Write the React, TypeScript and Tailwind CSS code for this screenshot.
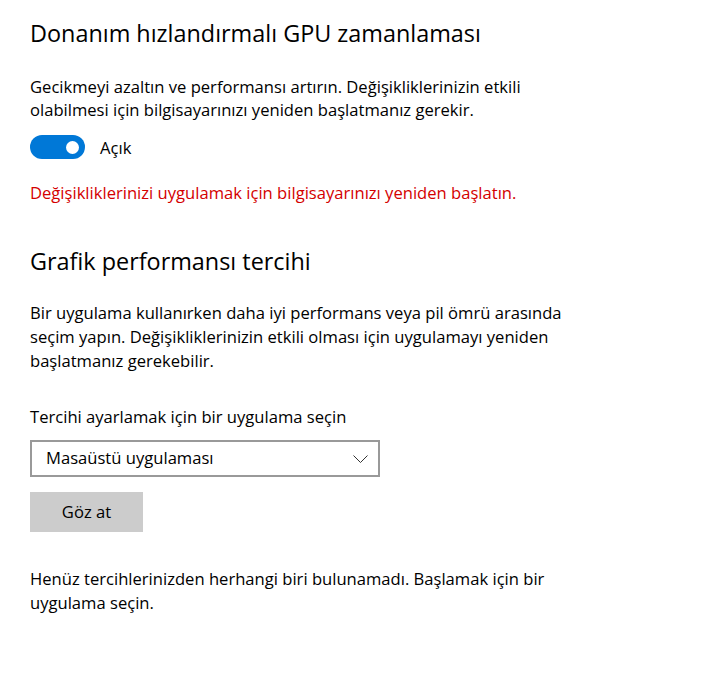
import { useState } from "react";

function Toggle({ on, onChange }: { on: boolean; onChange: () => void }) {
  return (
    <button
      type="button"
      onClick={onChange}
      className={
        on
          ? "flex h-[24px] w-[55px] items-center justify-end rounded-full bg-[#0078d7] pr-[6px]"
          : "flex h-[24px] w-[55px] items-center justify-start rounded-full border-2 border-[#333] bg-white pl-[4px]"
      }
    >
      <span
        className={
          on
            ? "block h-[13px] w-[13px] rounded-full bg-white"
            : "block h-[13px] w-[13px] rounded-full bg-[#333]"
        }
      />
    </button>
  );
}

export default function App() {
  const [enabled, setEnabled] = useState(true);

  return (
    <main
      className="min-h-screen bg-white pl-[30px] pt-[17px] text-black"
      style={{ fontFamily: '"Open Sans", "Noto Sans", sans-serif' }}
    >
      <h1 className="text-[23.4px] leading-[32px] font-normal">
        Donanım hızlandırmalı GPU zamanlaması
      </h1>
      <p className="mt-[26px] text-[16.6px] leading-[23px]">
        Gecikmeyi azaltın ve performansı artırın. Değişikliklerinizin etkili
        <br />
        olabilmesi için bilgisayarınızı yeniden başlatmanız gerekir.
      </p>
      <div className="mt-[14px] flex items-center gap-[15px]">
        <Toggle on={enabled} onChange={() => setEnabled(!enabled)} />
        <span className="text-[16.6px] leading-[23px]">{enabled ? "Açık" : "Kapalı"}</span>
      </div>
      <p className="mt-[22px] text-[16.6px] leading-[23px] text-[#d40000]">
        Değişikliklerinizi uygulamak için bilgisayarınızı yeniden başlatın.
      </p>

      <h2 className="mt-[41px] text-[23.4px] leading-[32px] font-normal">
        Grafik performansı tercihi
      </h2>
      <p className="mt-[24px] text-[16.6px] leading-[24px]">
        Bir uygulama kullanırken daha iyi performans veya pil ömrü arasında
        <br />
        seçim yapın. Değişikliklerinizin etkili olması için uygulamayı yeniden
        <br />
        başlatmanız gerekebilir.
      </p>
      <p className="mt-[32px] text-[16.6px] leading-[23px]">
        Tercihi ayarlamak için bir uygulama seçin
      </p>
      <div className="mt-[12px] flex h-[37px] w-[350px] items-center justify-between border-2 border-[#999] bg-white pl-[14px] pr-[10px]">
        <span className="text-[16.6px]">Masaüstü uygulaması</span>
        <svg width="15" height="8" viewBox="0 0 15 8" fill="none">
          <path d="M0.5 0.5L7.5 7.5L14.5 0.5" stroke="#333" strokeWidth="1" />
        </svg>
      </div>
      <button
        type="button"
        className="mt-[15px] block h-[40px] w-[113px] bg-[#cccccc] text-[16.6px]"
      >
        Göz at
      </button>
      <p className="mt-[35px] text-[16.6px] leading-[24px]">
        Henüz tercihlerinizden herhangi biri bulunamadı. Başlamak için bir
        <br />
        uygulama seçin.
      </p>
    </main>
  );
}
